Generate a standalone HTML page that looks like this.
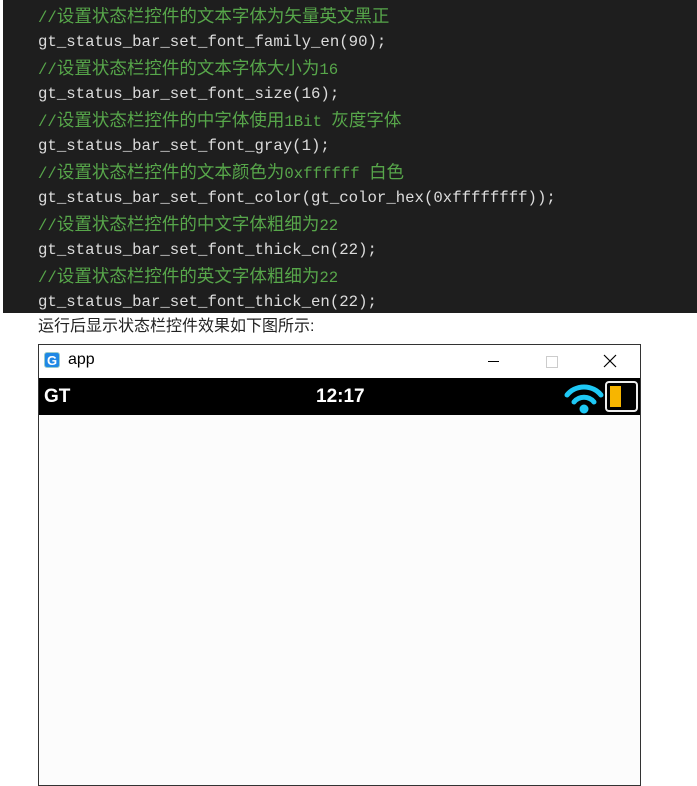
<!DOCTYPE html>
<html><head><meta charset="utf-8"><style>
body{margin:0;width:697px;height:767px;background:#fff;position:relative;overflow:hidden;font-family:"Liberation Sans","Noto Sans CJK SC",sans-serif}
.code{position:absolute;left:3px;top:0;width:694px;height:313px;background:#1e1e1e}
.l{position:absolute;left:35px;height:26px;line-height:26px;font-family:"Liberation Mono","Noto Sans CJK SC",monospace;font-size:15.7px;color:#dcdcdc;white-space:pre}
.c{color:#57a64a}
.c b{font-weight:normal;font-family:"Noto Sans CJK SC",sans-serif;font-size:17.5px;letter-spacing:0px}
.cap{position:absolute;left:38px;top:316px;font-size:16px;color:#222;line-height:22px}
.win{position:absolute;left:38px;top:344px;width:601px;height:440px;border:1px solid #333;background:#fcfcfc}
.tb{position:absolute;left:0;top:0;width:601px;height:33px;background:#fff}
.sb{position:absolute;left:0;top:33px;width:601px;height:37px;background:#000;color:#fff;font-size:19px;font-weight:bold}
</style></head><body>
<div class="code">
<div class="l c" style="top:3px">//<b>设置状态栏控件的文本字体为矢量英文黑正</b></div>
<div class="l" style="top:29px">gt_status_bar_set_font_family_en(90);</div>
<div class="l c" style="top:55px">//<b>设置状态栏控件的文本字体大小为</b>16</div>
<div class="l" style="top:81px">gt_status_bar_set_font_size(16);</div>
<div class="l c" style="top:107px">//<b>设置状态栏控件的中字体使用</b>1Bit <b>灰度字体</b></div>
<div class="l" style="top:133px">gt_status_bar_set_font_gray(1);</div>
<div class="l c" style="top:159px">//<b>设置状态栏控件的文本颜色为</b>0xffffff <b>白色</b></div>
<div class="l" style="top:185px">gt_status_bar_set_font_color(gt_color_hex(0xffffffff));</div>
<div class="l c" style="top:211px">//<b>设置状态栏控件的中文字体粗细为</b>22</div>
<div class="l" style="top:237px">gt_status_bar_set_font_thick_cn(22);</div>
<div class="l c" style="top:263px">//<b>设置状态栏控件的英文字体粗细为</b>22</div>
<div class="l" style="top:289px">gt_status_bar_set_font_thick_en(22);</div>
</div>
<div class="cap">运行后显示状态栏控件效果如下图所示:</div>
<div class="win">
<div class="tb">
<div style="position:absolute;left:5px;top:7px;width:16px;height:16px;border:1px solid #9cc;border-radius:3px;background:#1e88e5;color:#fff;font-size:13px;font-weight:bold;text-align:center;line-height:16px;box-sizing:border-box">G</div>
<div style="position:absolute;left:29px;top:6px;font-size:16px;color:#000">app</div>
<div style="position:absolute;left:449px;top:16px;width:11px;height:1px;background:#000"></div>
<div style="position:absolute;left:507px;top:11px;width:10px;height:10px;border:1px solid #ccc"></div>
<svg style="position:absolute;left:564px;top:9px" width="14" height="14"><path d="M1 1L13 13M13 1L1 13" stroke="#000" stroke-width="1.2"/></svg>
</div>
<div class="sb">
<div style="position:absolute;left:5px;top:8px">GT</div>
<div style="position:absolute;left:277px;top:8px">12:17</div>
<svg style="position:absolute;left:524px;top:2px" width="42" height="36" viewBox="0 0 42 36">
<g fill="none" stroke="#1ec8f5" stroke-width="5" stroke-linecap="round">
<path d="M4 15 A22 22 0 0 1 38 15"/><path d="M11 22 A13 13 0 0 1 31 22"/></g>
<circle cx="21" cy="29" r="4.5" fill="#1ec8f5"/></svg>
<div style="position:absolute;left:566px;top:3px;width:33px;height:31px;border:2px solid #eee;border-radius:4px;box-sizing:border-box"></div>
<div style="position:absolute;left:571px;top:8px;width:11px;height:21px;background:#f7b500"></div>
</div>
</div>
</body></html>
